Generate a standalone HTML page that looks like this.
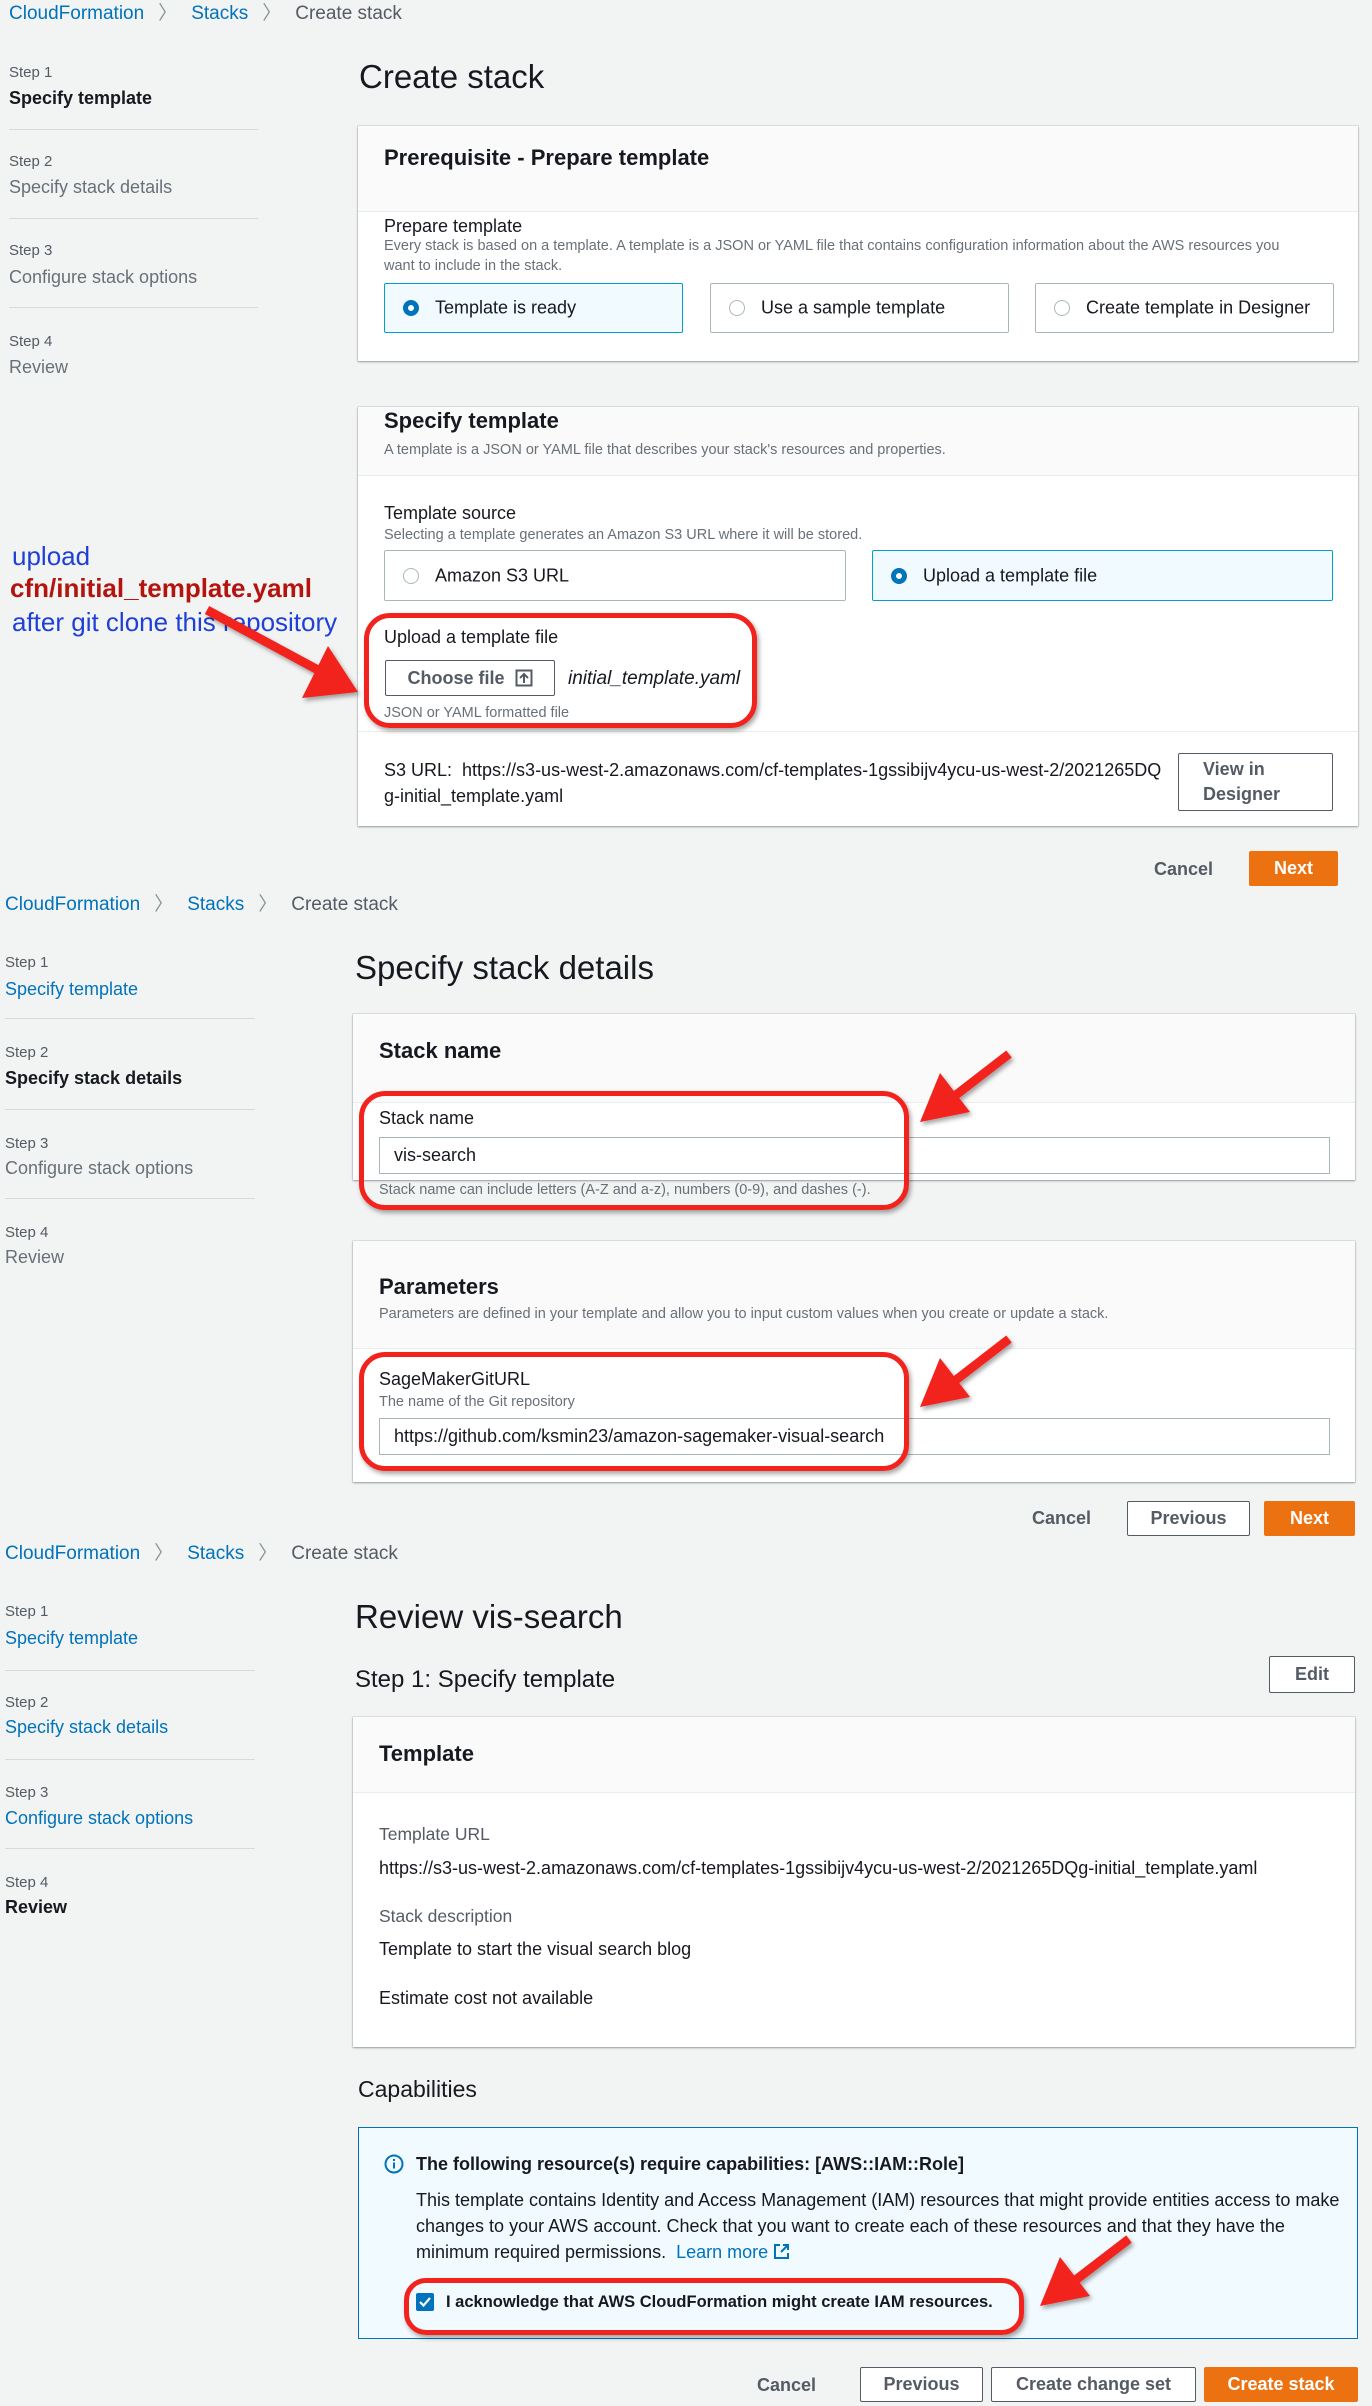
<!DOCTYPE html>
<html><head><meta charset="utf-8">
<style>
*{box-sizing:border-box;margin:0;padding:0}
body{width:1372px;height:2406px;background:#f2f3f3;font-family:"Liberation Sans",sans-serif;color:#16191f;position:relative;overflow:hidden}
.t{position:absolute;white-space:nowrap;line-height:1}
.bc{font-size:19px;color:#0073bb}
.bc .g{color:#545b64}
.bc .sep{color:#879596;margin:0 14px}
.sl{font-size:15px;color:#545b64}
.sn{font-size:18px;color:#687078}
.sn.a{color:#16191f;font-weight:bold}
.sn.l{color:#0073bb}
.div{position:absolute;height:1px;background:#d5dbdb}
.h1{font-size:33px;color:#16191f}
.panel{position:absolute;background:#fff;box-shadow:0 1px 2px rgba(0,28,36,.35),0 0 0 1px rgba(0,28,36,.08)}
.ph{position:absolute;left:0;right:0;top:0;background:#fafafa;border-bottom:1px solid #eaeded}
.h2{font-size:22px;font-weight:bold}
.lab{font-size:18px}
.desc{font-size:14.5px;color:#687078}
.tile{position:absolute;border:1px solid #aab7b8;background:#fff;border-radius:2px}
.tile.sel{border-color:#00a1c9;background:#f1faff}
.tile span{position:absolute;left:50px;top:50%;transform:translateY(-50%);font-size:18px;white-space:nowrap}
.rad{position:absolute;left:18px;top:50%;margin-top:-8px;width:16px;height:16px;border-radius:50%;border:1px solid #aab7b8;background:#fff}
.rad.on{border:5px solid #0073bb}
.btn{position:absolute;border:1px solid #545b64;background:#fff;color:#545b64;font-weight:bold;font-size:18px;display:flex;align-items:center;justify-content:center;border-radius:2px}
.btn.o{background:#ec7211;border-color:#ec7211;color:#fff}
.inp{position:absolute;border:1px solid #aab7b8;background:#fff;font-size:18px;padding-left:14px;display:flex;align-items:center}
.red{position:absolute;border:5px solid #f2231d;border-radius:26px;box-shadow:2px 3px 5px rgba(0,0,0,.35)}
</style></head><body>

<!-- SECTION 1 -->
<div class="t bc" style="left:9px;top:4px">CloudFormation<span class="sep">〉</span>Stacks<span class="sep">〉</span><span class="g">Create stack</span></div>
<div class="t sl" style="left:9px;top:65px">Step 1</div>
<div class="t sn a" style="left:9px;top:89px">Specify template</div>
<div class="div" style="left:9px;top:129px;width:249px"></div>
<div class="t sl" style="left:9px;top:154px">Step 2</div>
<div class="t sn" style="left:9px;top:178px">Specify stack details</div>
<div class="div" style="left:9px;top:218px;width:249px"></div>
<div class="t sl" style="left:9px;top:243px">Step 3</div>
<div class="t sn" style="left:9px;top:268px">Configure stack options</div>
<div class="div" style="left:9px;top:307px;width:249px"></div>
<div class="t sl" style="left:9px;top:334px">Step 4</div>
<div class="t sn" style="left:9px;top:358px">Review</div>
<div class="t h1" style="left:359px;top:60px">Create stack</div>

<div class="panel" style="left:358px;top:126px;width:1000px;height:235px">
  <div class="ph" style="height:86px"></div>
  <div class="t h2" style="left:26px;top:21px">Prerequisite - Prepare template</div>
  <div class="t lab" style="left:26px;top:91px">Prepare template</div>
  <div class="t desc" style="left:26px;top:113px">Every stack is based on a template. A template is a JSON or YAML file that contains configuration information about the AWS resources you</div>
  <div class="t desc" style="left:26px;top:133px">want to include in the stack.</div>
  <div class="tile sel" style="left:26px;top:157px;width:299px;height:50px"><div class="rad on"></div><span>Template is ready</span></div>
  <div class="tile" style="left:352px;top:157px;width:299px;height:50px"><div class="rad"></div><span>Use a sample template</span></div>
  <div class="tile" style="left:677px;top:157px;width:299px;height:50px"><div class="rad"></div><span>Create template in Designer</span></div>
</div>

<div class="panel" style="left:358px;top:407px;width:1000px;height:419px">
  <div class="ph" style="height:69px"></div>
  <div class="t h2" style="left:26px;top:3px">Specify template</div>
  <div class="t desc" style="left:26px;top:36px">A template is a JSON or YAML file that describes your stack's resources and properties.</div>
  <div class="t lab" style="left:26px;top:97px">Template source</div>
  <div class="t desc" style="left:26px;top:121px">Selecting a template generates an Amazon S3 URL where it will be stored.</div>
  <div class="tile" style="left:26px;top:143px;width:462px;height:51px"><div class="rad"></div><span>Amazon S3 URL</span></div>
  <div class="tile sel" style="left:514px;top:143px;width:461px;height:51px"><div class="rad on"></div><span>Upload a template file</span></div>
  <div class="t lab" style="left:26px;top:221px">Upload a template file</div>
  <div class="btn" style="left:27px;top:253px;width:170px;height:36px">Choose file&nbsp;&nbsp;<svg width="18" height="18" viewBox="0 0 18 18"><rect x="1.5" y="1.5" width="15" height="15" fill="none" stroke="#545b64" stroke-width="2"/><path d="M9 14V5M5 9l4-4 4 4" fill="none" stroke="#545b64" stroke-width="2"/></svg></div>
  <div class="t" style="left:210px;top:262px;font-size:19px;font-style:italic">initial_template.yaml</div>
  <div class="t desc" style="left:26px;top:299px">JSON or YAML formatted file</div>
  <div class="div" style="left:0;right:0;top:324px;background:#eaeded"></div>
  <div class="t lab" style="left:26px;top:354px">S3 URL:&nbsp; https://s3-us-west-2.amazonaws.com/cf-templates-1gssibijv4ycu-us-west-2/2021265DQ</div>
  <div class="t lab" style="left:26px;top:380px">g-initial_template.yaml</div>
  <div class="btn" style="left:820px;top:346px;width:155px;height:58px;justify-content:flex-start;padding-left:24px;line-height:25px;text-align:left">View in<br>Designer</div>
</div>
<div class="red" style="left:364px;top:613px;width:393px;height:115px"></div>

<div class="t" style="left:12px;top:543px;font-size:26px;color:#1f3fd6">upload</div>
<div class="t" style="left:10px;top:575px;font-size:26px;color:#b3140e;font-weight:bold">cfn/initial_template.yaml</div>
<div class="t" style="left:12px;top:609px;font-size:26px;color:#1f3fd6">after git clone this repository</div>

<div class="t" style="left:1154px;top:860px;font-size:18px;font-weight:bold;color:#545b64">Cancel</div>
<div class="btn o" style="left:1249px;top:851px;width:89px;height:35px">Next</div>

<!-- SECTION 2 -->
<div class="t bc" style="left:5px;top:895px">CloudFormation<span class="sep">〉</span>Stacks<span class="sep">〉</span><span class="g">Create stack</span></div>
<div class="t sl" style="left:5px;top:955px">Step 1</div>
<div class="t sn l" style="left:5px;top:980px">Specify template</div>
<div class="div" style="left:5px;top:1018px;width:250px"></div>
<div class="t sl" style="left:5px;top:1045px">Step 2</div>
<div class="t sn a" style="left:5px;top:1069px">Specify stack details</div>
<div class="div" style="left:5px;top:1109px;width:250px"></div>
<div class="t sl" style="left:5px;top:1136px">Step 3</div>
<div class="t sn" style="left:5px;top:1159px">Configure stack options</div>
<div class="div" style="left:5px;top:1198px;width:250px"></div>
<div class="t sl" style="left:5px;top:1225px">Step 4</div>
<div class="t sn" style="left:5px;top:1248px">Review</div>
<div class="t h1" style="left:355px;top:951px">Specify stack details</div>

<div class="panel" style="left:353px;top:1014px;width:1002px;height:166px">
  <div class="ph" style="height:89px"></div>
  <div class="t h2" style="left:26px;top:26px">Stack name</div>
  <div class="t lab" style="left:26px;top:95px">Stack name</div>
  <div class="inp" style="left:26px;top:123px;width:951px;height:37px">vis-search</div>
  <div class="t desc" style="left:26px;top:169px">Stack name can include letters (A-Z and a-z), numbers (0-9), and dashes (-).</div>
</div>
<div class="panel" style="left:353px;top:1241px;width:1002px;height:241px">
  <div class="ph" style="height:108px"></div>
  <div class="t h2" style="left:26px;top:35px">Parameters</div>
  <div class="t desc" style="left:26px;top:66px">Parameters are defined in your template and allow you to input custom values when you create or update a stack.</div>
  <div class="t lab" style="left:26px;top:129px">SageMakerGitURL</div>
  <div class="t desc" style="left:26px;top:154px">The name of the Git repository</div>
  <div class="inp" style="left:26px;top:177px;width:951px;height:37px">https://github.com/ksmin23/amazon-sagemaker-visual-search</div>
</div>
<div class="red" style="left:359px;top:1091px;width:550px;height:119px"></div>
<div class="red" style="left:359px;top:1352px;width:550px;height:119px"></div>

<div class="t" style="left:1032px;top:1509px;font-size:18px;font-weight:bold;color:#545b64">Cancel</div>
<div class="btn" style="left:1127px;top:1501px;width:123px;height:35px">Previous</div>
<div class="btn o" style="left:1264px;top:1501px;width:91px;height:35px">Next</div>

<!-- SECTION 3 -->
<div class="t bc" style="left:5px;top:1544px">CloudFormation<span class="sep">〉</span>Stacks<span class="sep">〉</span><span class="g">Create stack</span></div>
<div class="t sl" style="left:5px;top:1604px">Step 1</div>
<div class="t sn l" style="left:5px;top:1629px">Specify template</div>
<div class="div" style="left:5px;top:1670px;width:250px"></div>
<div class="t sl" style="left:5px;top:1695px">Step 2</div>
<div class="t sn l" style="left:5px;top:1718px">Specify stack details</div>
<div class="div" style="left:5px;top:1759px;width:250px"></div>
<div class="t sl" style="left:5px;top:1785px">Step 3</div>
<div class="t sn l" style="left:5px;top:1809px">Configure stack options</div>
<div class="div" style="left:5px;top:1848px;width:250px"></div>
<div class="t sl" style="left:5px;top:1875px">Step 4</div>
<div class="t sn a" style="left:5px;top:1898px">Review</div>
<div class="t h1" style="left:355px;top:1600px">Review vis-search</div>
<div class="t" style="left:355px;top:1668px;font-size:24px">Step 1: Specify template</div>
<div class="btn" style="left:1269px;top:1656px;width:86px;height:37px">Edit</div>

<div class="panel" style="left:353px;top:1717px;width:1002px;height:330px">
  <div class="ph" style="height:76px"></div>
  <div class="t h2" style="left:26px;top:26px">Template</div>
  <div class="t" style="left:26px;top:109px;font-size:17.5px;color:#545b64">Template URL</div>
  <div class="t lab" style="left:26px;top:142px">https://s3-us-west-2.amazonaws.com/cf-templates-1gssibijv4ycu-us-west-2/2021265DQg-initial_template.yaml</div>
  <div class="t" style="left:26px;top:191px;font-size:17.5px;color:#545b64">Stack description</div>
  <div class="t lab" style="left:26px;top:223px">Template to start the visual search blog</div>
  <div class="t lab" style="left:26px;top:272px">Estimate cost not available</div>
</div>

<div class="t" style="left:358px;top:2078px;font-size:23px">Capabilities</div>
<div style="position:absolute;left:358px;top:2127px;width:1000px;height:212px;border:1px solid #0073bb;background:#f1faff"></div>
<svg style="position:absolute;left:384px;top:2154px" width="20" height="20" viewBox="0 0 20 20"><circle cx="10" cy="10" r="8.5" fill="none" stroke="#0073bb" stroke-width="2"/><rect x="9" y="8.5" width="2" height="6" fill="#0073bb"/><rect x="9" y="5" width="2" height="2" fill="#0073bb"/></svg>
<div class="t" style="left:416px;top:2155px;font-size:18px;font-weight:bold">The following resource(s) require capabilities: [AWS::IAM::Role]</div>
<div class="t lab" style="left:416px;top:2191px">This template contains Identity and Access Management (IAM) resources that might provide entities access to make</div>
<div class="t lab" style="left:416px;top:2217px">changes to your AWS account. Check that you want to create each of these resources and that they have the</div>
<div class="t lab" style="left:416px;top:2243px">minimum required permissions.&nbsp; <span style="color:#0073bb">Learn more <svg width="17" height="17" viewBox="0 0 17 17" style="vertical-align:-2px"><path d="M7 2H2v13h13v-5M10 2h5v5M15 2L8 9" fill="none" stroke="#0073bb" stroke-width="2"/></svg></span></div>
<div style="position:absolute;left:416px;top:2293px;width:18px;height:18px;background:#0073bb;border-radius:2px"><svg width="18" height="18" viewBox="0 0 18 18"><path d="M4 9l3.5 3.5L14 5" fill="none" stroke="#fff" stroke-width="2.2"/></svg></div>
<div class="t" style="left:446px;top:2294px;font-size:16.5px;font-weight:bold">I acknowledge that AWS CloudFormation might create IAM resources.</div>
<div class="red" style="left:404px;top:2278px;width:620px;height:57px;border-radius:22px"></div>

<div class="t" style="left:757px;top:2376px;font-size:18px;font-weight:bold;color:#545b64">Cancel</div>
<div class="btn" style="left:860px;top:2367px;width:123px;height:35px">Previous</div>
<div class="btn" style="left:991px;top:2367px;width:205px;height:35px">Create change set</div>
<div class="btn o" style="left:1204px;top:2367px;width:154px;height:35px">Create stack</div>

<!-- arrows -->
<svg style="position:absolute;left:0;top:0" width="1372" height="2406">
<defs><filter id="sh"><feDropShadow dx="2" dy="3" stdDeviation="2" flood-opacity=".35"/></filter></defs>
<g fill="#f2231d" stroke="#f2231d" filter="url(#sh)">
<line x1="207" y1="610" x2="318" y2="670" stroke-width="9"/><polygon points="358,692 302,698 328,646" stroke="none"/>
<line x1="1009" y1="1054" x2="952" y2="1098" stroke-width="9"/><polygon points="920,1122 940,1073 970,1112" stroke="none"/>
<line x1="1009" y1="1339" x2="952" y2="1383" stroke-width="9"/><polygon points="920,1407 940,1358 970,1397" stroke="none"/>
<line x1="1129" y1="2239" x2="1073" y2="2282" stroke-width="9"/><polygon points="1040,2306 1060,2257 1090,2296" stroke="none"/>
</g></svg>
</body></html>
